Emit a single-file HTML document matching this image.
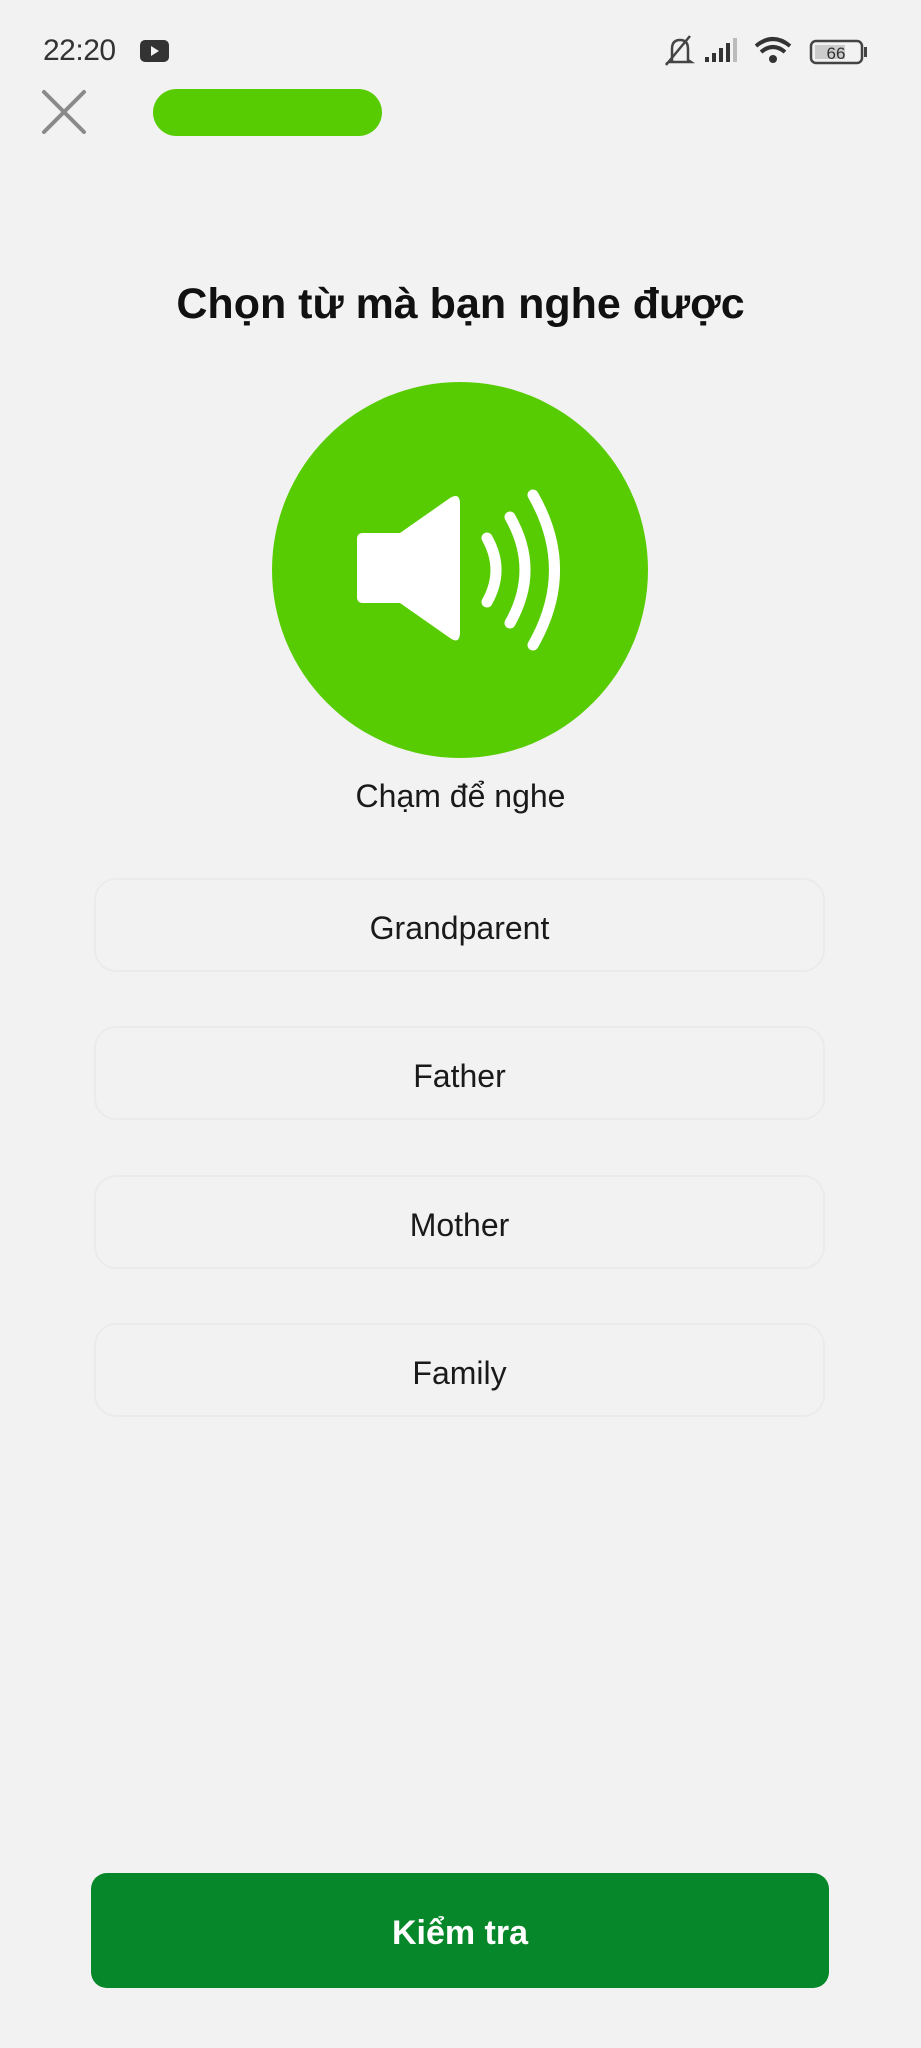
<!DOCTYPE html>
<html><head><meta charset="utf-8"><style>
body{margin:0;width:921px;height:2048px;background:#f2f2f2;position:relative;overflow:hidden;font-family:"Liberation Sans",Roboto,sans-serif;}
.abs{position:absolute}
.opt{position:absolute;left:94px;width:731px;height:94px;border:2px solid #ebebeb;border-radius:22px;box-sizing:border-box;display:flex;align-items:center;justify-content:center;font-size:32px;color:#1a1a1a;padding-top:6px}
</style></head><body>
<div class="abs" style="left:43px;top:34px;font-size:30px;color:#333;letter-spacing:-0.5px">22:20</div>
<div class="abs" style="left:140px;top:40px;width:29px;height:22px;background:#333;border-radius:5px"></div>
<div class="abs" style="left:151px;top:46px;width:0;height:0;border-left:8px solid #f2f2f2;border-top:5px solid transparent;border-bottom:5px solid transparent"></div>
<svg class="abs" style="left:660px;top:32px" width="220" height="40" viewBox="0 0 220 40">
<path d="M12 28 L12 17 Q12 8 20 8 Q28 8 28 17 L28 28 L31 30 L9 30 Z" fill="none" stroke="#444" stroke-width="2.5"/>
<line x1="6" y1="33" x2="30" y2="4" stroke="#444" stroke-width="2.5"/>
<rect x="45" y="25" width="4" height="5" fill="#333"/><rect x="52" y="21" width="4" height="9" fill="#333"/><rect x="59" y="16" width="4" height="14" fill="#333"/><rect x="66" y="11" width="4" height="19" fill="#333"/><rect x="73" y="6" width="4" height="24" fill="#bbb"/>
<path d="M96 14 Q113 0 130 14" fill="none" stroke="#333" stroke-width="4"/>
<path d="M101 20 Q113 10 125 20" fill="none" stroke="#333" stroke-width="4"/>
<circle cx="113" cy="27" r="4" fill="#333"/>
<rect x="151" y="9" width="51" height="22" rx="5" fill="none" stroke="#444" stroke-width="2.5"/>
<rect x="155" y="13" width="30" height="14" fill="#ccc"/>
<text x="176" y="27" font-size="17" text-anchor="middle" fill="#333" font-family="Liberation Sans">66</text>
<rect x="204" y="15" width="3" height="10" fill="#444"/>
</svg>
<svg class="abs" style="left:40px;top:88px" width="48" height="48"><path d="M4 4 L44 44 M44 4 L4 44" stroke="#8a8a8a" stroke-width="4" stroke-linecap="round"/></svg>
<div class="abs" style="left:153px;top:89px;width:229px;height:47px;background:#58cc02;border-radius:24px"></div>
<div class="abs" style="left:0;width:921px;top:280px;text-align:center;font-size:43px;font-weight:bold;color:#111">Chọn từ mà bạn nghe được</div>
<svg class="abs" style="left:270px;top:380px" width="380" height="380" viewBox="270 380 380 380">
<circle cx="460" cy="570" r="188" fill="#58cc02"/>
<path d="M363 533 L400 533 L450 498 Q460 492 460 504 L460 632 Q460 645 450 638 L400 603 L363 603 Q357 603 357 597 L357 539 Q357 533 363 533 Z" fill="#fff"/>
<path d="M487 538 Q505 570 487 602" fill="none" stroke="#fff" stroke-width="11" stroke-linecap="round"/>
<path d="M510 517 Q540 570 510 623" fill="none" stroke="#fff" stroke-width="11" stroke-linecap="round"/>
<path d="M533 495 Q576 570 533 645" fill="none" stroke="#fff" stroke-width="11" stroke-linecap="round"/>
</svg>
<div class="abs" style="left:0;width:921px;top:778px;text-align:center;font-size:32px;color:#1a1a1a">Chạm để nghe</div>
<div class="opt" style="top:878px">Grandparent</div>
<div class="opt" style="top:1026px">Father</div>
<div class="opt" style="top:1175px">Mother</div>
<div class="opt" style="top:1323px">Family</div>
<div class="abs" style="left:91px;top:1873px;width:738px;height:115px;background:#06882a;border-radius:16px;display:flex;align-items:center;justify-content:center;color:#fff;font-weight:bold;font-size:34px;padding-top:6px;box-sizing:border-box">Kiểm tra</div>
</body></html>
